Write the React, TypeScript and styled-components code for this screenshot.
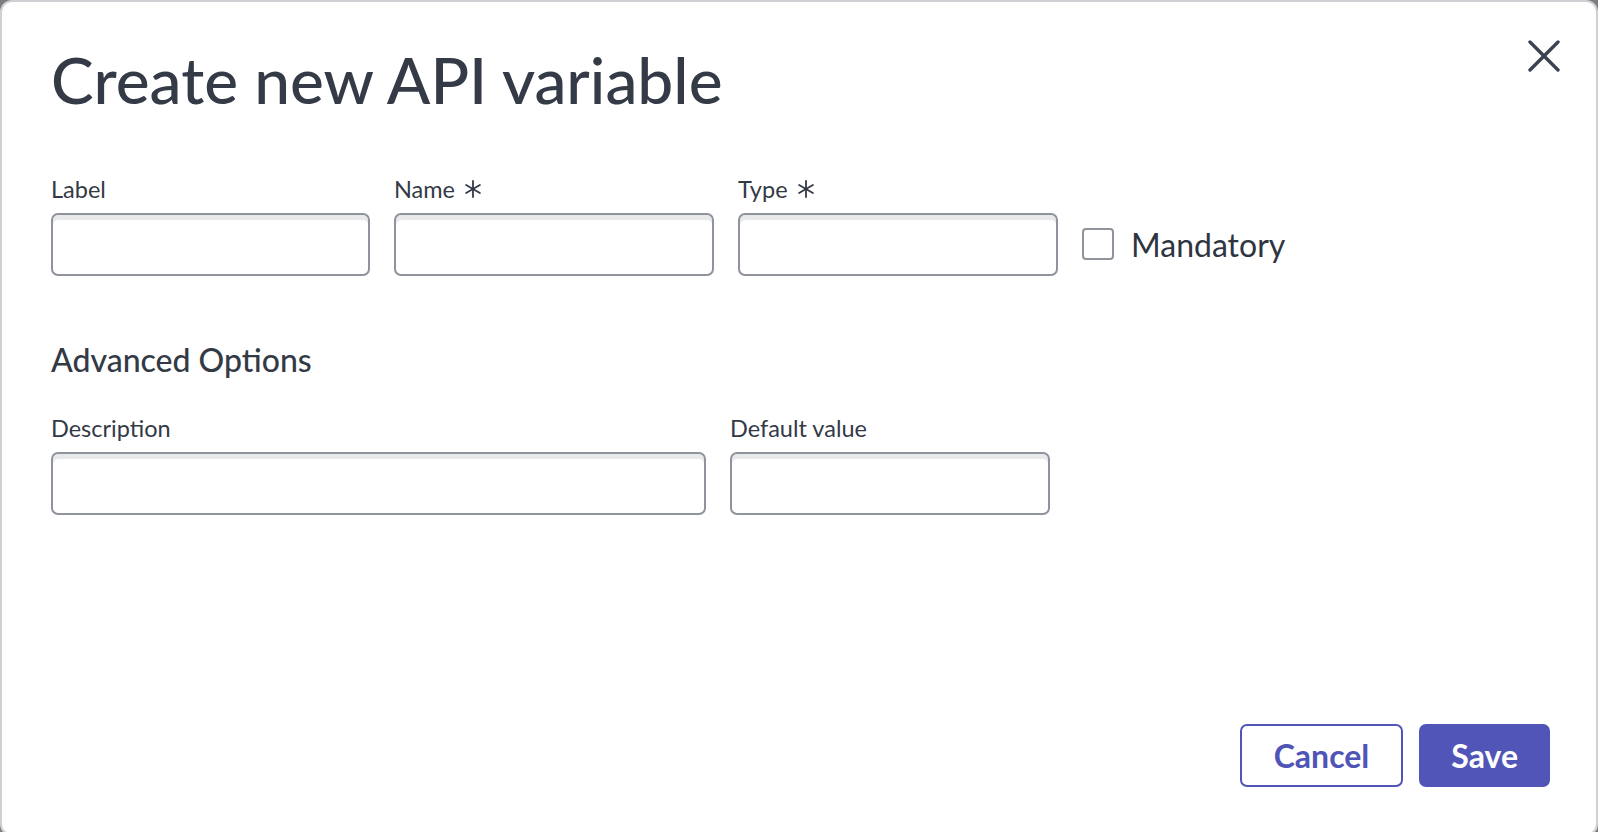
import React from "react";
import styled, { createGlobalStyle } from "styled-components";

const GlobalStyle = createGlobalStyle`
  html, body {
    margin: 0;
    padding: 0;
    background: #7d7d80;
    overflow: hidden;
  }
  * { box-sizing: border-box; }
`;

const Dialog = styled.div`
  width: 1598px;
  height: 836px;
  background: #ffffff;
  border: 2px solid #cfd0d4;
  border-radius: 12px;
  padding: 0 46px 47px 49px;
  display: flex;
  flex-direction: column;
  font-family: Lato, "Open Sans", sans-serif;
  color: #333a46;
`;

const Header = styled.div`
  display: flex;
  justify-content: space-between;
  align-items: flex-start;
  padding-top: 40px;
`;

const Title = styled.h1`
  margin: 0;
  font-size: 64px;
  font-weight: 500;
  line-height: 1.2;
  color: #343b47;
`;

const CloseButton = styled.button`
  margin: -4px -12px 0 0;
  width: 36px;
  height: 36px;
  padding: 0;
  border: none;
  background: transparent;
  display: flex;
  align-items: center;
  justify-content: center;
  cursor: pointer;
`;

const Row = styled.div<{ $top: number }>`
  display: flex;
  align-items: flex-end;
  gap: 24px;
  margin-top: ${(p) => p.$top}px;
`;

const Field = styled.label`
  display: flex;
  flex-direction: column;
  gap: 10px;
`;

const FieldLabel = styled.span`
  display: flex;
  align-items: center;
  gap: 9px;
  font-size: 23.5px;
  line-height: 28px;
  color: #333a46;
`;

const Input = styled.input<{ $width: number }>`
  width: ${(p) => p.$width}px;
  height: 63px;
  border: 2px solid #8f939c;
  border-radius: 7px;
  background: #ffffff;
  box-shadow: inset 0 5px 0 #e8e9ea;
  font-family: inherit;
  font-size: 22px;
  padding: 0 14px;
  outline: none;
`;

const CheckRow = styled.label`
  display: flex;
  align-items: center;
  gap: 17px;
  height: 63px;
  font-size: 32px;
  color: #2f3540;
  cursor: pointer;
`;

const Box = styled.span`
  width: 32px;
  height: 32px;
  border: 2px solid #8f939c;
  border-radius: 4px;
  background: #ffffff;
`;

const SectionTitle = styled.h2`
  margin: 65px 0 0 0;
  font-size: 32px;
  font-weight: 500;
  line-height: 38px;
  color: #333a46;
`;

const Footer = styled.div`
  margin-top: auto;
  display: flex;
  justify-content: flex-end;
  gap: 16px;
`;

const Button = styled.button<{ $primary?: boolean }>`
  height: 63px;
  padding: 0 ${(p) => (p.$primary ? 30 : 32)}px;
  border-radius: 7px;
  border: 2px solid #5055b7;
  background: ${(p) => (p.$primary ? "#5055b7" : "#ffffff")};
  color: ${(p) => (p.$primary ? "#ffffff" : "#4f54b6")};
  font-family: Lato, "Open Sans", sans-serif;
  font-weight: 700;
  font-size: 32px;
  cursor: pointer;
`;

const Asterisk = () => (
  <svg width="18" height="18" viewBox="0 0 18 18" aria-hidden="true">
    <g stroke="#333a46" strokeWidth="1.8" strokeLinecap="round">
      <line x1="9" y1="1" x2="9" y2="17" />
      <line x1="2.1" y1="5" x2="15.9" y2="13" />
      <line x1="2.1" y1="13" x2="15.9" y2="5" />
    </g>
  </svg>
);

const CloseIcon = () => (
  <svg width="32" height="32" viewBox="0 0 32 32" aria-hidden="true">
    <g stroke="#3b4350" strokeWidth="3.4" strokeLinecap="round">
      <line x1="2" y1="2" x2="30" y2="30" />
      <line x1="30" y1="2" x2="2" y2="30" />
    </g>
  </svg>
);

export default function App() {
  return (
    <>
      <GlobalStyle />
      <Dialog role="dialog">
        <Header>
          <Title>Create new API variable</Title>
          <CloseButton aria-label="Close">
            <CloseIcon />
          </CloseButton>
        </Header>

        <Row $top={56}>
          <Field>
            <FieldLabel>Label</FieldLabel>
            <Input $width={319} />
          </Field>
          <Field>
            <FieldLabel>
              Name <Asterisk />
            </FieldLabel>
            <Input $width={320} />
          </Field>
          <Field>
            <FieldLabel>
              Type <Asterisk />
            </FieldLabel>
            <Input $width={320} />
          </Field>
          <CheckRow>
            <Box />
            Mandatory
          </CheckRow>
        </Row>

        <SectionTitle>Advanced Options</SectionTitle>

        <Row $top={35}>
          <Field>
            <FieldLabel>Description</FieldLabel>
            <Input $width={655} />
          </Field>
          <Field>
            <FieldLabel>Default value</FieldLabel>
            <Input $width={320} />
          </Field>
        </Row>

        <Footer>
          <Button>Cancel</Button>
          <Button $primary>Save</Button>
        </Footer>
      </Dialog>
    </>
  );
}
